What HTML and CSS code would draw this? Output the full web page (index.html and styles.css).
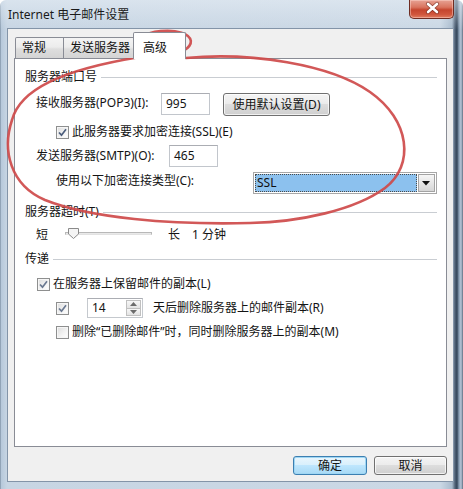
FILE: index.html
```html
<!DOCTYPE html>
<html lang="zh-CN">
<head>
<meta charset="utf-8">
<title>Internet 电子邮件设置</title>
<link rel="stylesheet" href="styles.css">
</head>
<body>
<div class="window">
  <div class="titlebar">
    <span class="title">Internet 电子邮件设置</span>
    <div class="close">
      <svg width="45" height="19" viewBox="0 0 45 19">
        <path d="M18 5 L27 13 M27 5 L18 13" stroke="#5a1a10" stroke-width="4.2" stroke-linecap="round" opacity="0.55"/>
        <path d="M18 5 L27 13 M27 5 L18 13" stroke="#ffffff" stroke-width="2.6" stroke-linecap="round"/>
      </svg>
    </div>
  </div>
  <div class="client">
    <div class="tabs">
      <div class="tab tab-general">常规</div>
      <div class="tab tab-send">发送服务器</div>
      <div class="tab tab-adv active">高级</div>
    </div>
    <div class="panel">
      <div class="group"><span>服务器端口号</span><i class="rule"></i></div>

      <div class="row row-pop">
        <span class="lbl lbl-pop">接收服务器(POP3)(I):</span>
        <span class="input">995</span>
        <span class="btn btn-default">使用默认设置(D)</span>
      </div>

      <div class="row row-ssl">
        <span class="cb checked"><svg width="11" height="11" viewBox="0 0 11 11"><path d="M2 5.5 L4.5 8.2 L9 2.3" fill="none" stroke="#4b5d7c" stroke-width="1.7"/></svg></span>
        <span class="cb-text">此服务器要求加密连接(SSL)(E)</span>
      </div>

      <div class="row row-smtp">
        <span class="lbl lbl-smtp">发送服务器(SMTP)(O):</span>
        <span class="input">465</span>
      </div>

      <div class="row row-crypt">
        <span class="lbl lbl-crypt">使用以下加密连接类型(C):</span>
        <span class="select">
          <span class="select-value">SSL</span>
          <span class="select-arrow"><svg width="9" height="5" viewBox="0 0 9 5"><path d="M0 0 H8 L4 4.5 Z" fill="#111"/></svg></span>
        </span>
      </div>

      <div class="group group-timeout"><span>服务器超时(T)</span><i class="rule"></i></div>

      <div class="row row-slider">
        <span class="s-short">短</span>
        <span class="slider">
          <i class="track"></i>
          <svg class="thumb" width="11" height="11" viewBox="0 0 11 11"><path d="M0.5 0.5 H10.5 V6 L5.5 10.5 L0.5 6 Z" fill="#f4f4f4" stroke="#8a8a8a"/></svg>
        </span>
        <span class="s-long">长</span>
        <span class="s-val">1 分钟</span>
      </div>

      <div class="group group-deliver"><span>传递</span><i class="rule"></i></div>

      <div class="row row-keep">
        <span class="cb checked"><svg width="11" height="11" viewBox="0 0 11 11"><path d="M2 5.5 L4.5 8.2 L9 2.3" fill="none" stroke="#6a7890" stroke-width="1.7"/></svg></span>
        <span class="cb-text">在服务器上保留邮件的副本(L)</span>
      </div>

      <div class="row row-days">
        <span class="cb checked"><svg width="11" height="11" viewBox="0 0 11 11"><path d="M2 5.5 L4.5 8.2 L9 2.3" fill="none" stroke="#6a7890" stroke-width="1.7"/></svg></span>
        <span class="spin">
          <span class="spin-val">14</span>
          <span class="spin-btns">
            <span class="spin-b"><svg width="7" height="4" viewBox="0 0 7 4"><path d="M0 4 L3.5 0 L7 4 Z" fill="#6b6b6b"/></svg></span>
            <span class="spin-b"><svg width="7" height="4" viewBox="0 0 7 4"><path d="M0 0 L3.5 4 L7 0 Z" fill="#6b6b6b"/></svg></span>
          </span>
        </span>
        <span class="days-text">天后删除服务器上的邮件副本(R)</span>
      </div>

      <div class="row row-del">
        <span class="cb"></span>
        <span class="cb-text">删除“已删除邮件”时，同时删除服务器上的副本(M)</span>
      </div>
    </div>
    <div class="footer">
      <span class="btn btn-ok">确定</span>
      <span class="btn btn-cancel">取消</span>
    </div>
  </div>

  <svg class="annot" width="463" height="489" viewBox="0 0 463 489">
    <ellipse cx="162" cy="44" rx="29" ry="13" transform="rotate(-6 162 44)" fill="none" stroke="#cf4a4a" stroke-width="2.6"/>
    <path d="M186 58 C250 52, 330 64, 370 92 C410 120, 415 165, 385 188 C355 210, 300 222, 250 223 C170 225, 90 218, 45 200 C10 185, 2 150, 12 120 C20 90, 60 70, 140 57" fill="none" stroke="#cf4a4a" stroke-width="2.6" stroke-linecap="round"/>
  </svg>
</div>
</body>
</html>
```

FILE: styles.css
```css
* { box-sizing: border-box; }

html, body {
  margin: 0;
  padding: 0;
  background: #ffffff;
}

.window {
  position: relative;
  width: 463px;
  height: 489px;
  display: flex;
  flex-direction: column;
  font-family: "Noto Sans", "Noto Sans CJK SC", sans-serif;
  font-size: 12px;
  color: #141414;
  background:
    linear-gradient(to bottom, rgba(232, 239, 246, 0.55) 0, rgba(214, 225, 236, 0) 30px),
    linear-gradient(to right, #6c7f93 0, #b6c8da 1px, #c7d5e3 7px, #cbd8e5 440px, #a9bbcd 452px, #506277 455px, #34465a 457px, #8a9fb5 459px, #b6c6d7 461px, #5d6e81 463px);
  border-radius: 6px 6px 0 0;
}

.titlebar {
  height: 28px;
  display: flex;
  align-items: flex-start;
  flex: none;
}

.title {
  margin-top: 6px;
  padding-left: 8px;
  line-height: 18px;
  color: #1a1a1a;
}

.close {
  margin-left: auto;
  margin-right: 9px;
  width: 45px;
  height: 19px;
  border: 1px solid #6e2c22;
  border-top: none;
  border-radius: 0 0 5px 5px;
  background: linear-gradient(to bottom, #e7a294 0, #d9745f 40%, #c5452e 55%, #d0563c 80%, #e07c5f 100%);
  box-shadow: inset 0 0 0 1px rgba(255, 220, 210, 0.45);
}

.close svg { display: block; margin-top: -1px; }

.client {
  flex: 1;
  margin: 0 9px 7px 7px;
  border: 1px solid #8394a8;
  background: #f0f0f0;
  display: flex;
  flex-direction: column;
  padding: 3px 6px 6px 6px;
}

/* tabs */
.tabs {
  display: flex;
  align-items: flex-end;
  height: 27px;
  margin-left: 1px;
  margin-bottom: -1px;
  position: relative;
  z-index: 1;
  flex: none;
}

.tab {
  height: 21px;
  margin-bottom: 1px;
  border: 1px solid #898c95;
  border-bottom: none;
  background: linear-gradient(to bottom, #f4f4f4 0, #ececec 45%, #dedede 55%, #d4d4d4 100%);
  line-height: 19px;
  padding-left: 6px;
  white-space: nowrap;
}

.tab-general { width: 49px; border-radius: 2px 0 0 0; }
.tab-send { width: 73px; margin-left: -1px; }

.tab.active {
  width: 53px;
  height: 27px;
  margin-left: -3px;
  margin-bottom: 0;
  background: #ffffff;
  padding-left: 9px;
  line-height: 30px;
  border-radius: 2px 2px 0 0;
}

/* panel */
.panel {
  flex: none;
  height: 389px;
  border: 1px solid #898c95;
  background: #ffffff;
  padding: 9px 9px 0 10px;
}

.group {
  display: flex;
  align-items: center;
  height: 18px;
  line-height: 18px;
}

.group .rule {
  flex: 1;
  height: 1px;
  margin-left: 4px;
  background: #c9cdd2;
}

.row {
  display: flex;
  align-items: center;
  line-height: 18px;
  white-space: nowrap;
}

.lbl { display: block; }

.row-pop {
  margin-top: 7px;
  height: 23px;
  align-items: flex-start;
  padding-left: 11px;
}
.row-pop .lbl { margin-top: 1px; }
.lbl-pop { width: 125px; }

.input {
  display: block;
  width: 49px;
  height: 22px;
  border: 1px solid #c2c6cc;
  border-top-color: #abadb3;
  background: #fff;
  padding-left: 4px;
  line-height: 20px;
}

.btn {
  display: block;
  height: 23px;
  border: 1px solid #707070;
  border-radius: 3px;
  background: linear-gradient(to bottom, #f4f4f4 0, #ececec 45%, #dddddd 50%, #cfcfcf 100%);
  box-shadow: inset 0 0 0 1px rgba(255, 255, 255, 0.7);
  text-align: center;
  line-height: 21px;
}

.btn-default {
  margin-left: 13px;
  width: 107px;
}

.row-ssl {
  margin-top: 7px;
  height: 18px;
  padding-left: 31px;
}

.cb {
  display: block;
  flex: none;
  width: 13px;
  height: 13px;
  border: 1px solid #8e8f8f;
  background: linear-gradient(135deg, #dcdcdc 0, #f4f4f4 60%, #ffffff 100%);
  box-shadow: inset 0 0 0 1px #f6f6f6;
}
.cb svg { display: block; margin: 0; }

.cb-text { margin-left: 3px; }

.row-smtp {
  margin-top: 4px;
  height: 22px;
  padding-left: 11px;
}
.lbl-smtp { width: 133px; }

.row-crypt {
  margin-top: 5px;
  height: 22px;
  align-items: flex-start;
  padding-left: 31px;
}
.lbl-crypt { width: 197px; }

.select {
  display: flex;
  width: 184px;
  height: 22px;
  border: 1px solid #a7a7a7;
  background: #fff;
  padding: 1px;
}

.select-value {
  flex: 1;
  background: #8cc1ee;
  border: 1px dotted #4a4a4a;
  line-height: 16px;
  padding-left: 1px;
  color: #101010;
}

.select-arrow {
  width: 17px;
  margin-left: 1px;
  border: 1px solid #a3a3a3;
  background: linear-gradient(to bottom, #f6f6f6 0, #e6e6e6 50%, #d6d6d6 100%);
  display: flex;
  align-items: center;
  justify-content: center;
}
.select-arrow svg { display: block; }

.group-timeout { margin-top: 9px; }

.row-slider {
  margin-top: 5px;
  height: 18px;
  padding-left: 11px;
}

.slider {
  position: relative;
  display: block;
  width: 87px;
  height: 18px;
  margin-left: 17px;
}

.slider .track {
  position: absolute;
  left: 0;
  right: 0;
  top: 6px;
  height: 3px;
  border: 1px solid #b8b8b8;
  border-bottom-color: #e2e2e2;
  background: #e9e9e9;
}

.slider .thumb {
  position: absolute;
  left: 3px;
  top: 2px;
}

.s-long { margin-left: 16px; }
.s-val { margin-left: 12px; }

.group-deliver { margin-top: 6px; }

.row-keep {
  margin-top: 7px;
  height: 18px;
  padding-left: 12px;
}

.row-days {
  margin-top: 5px;
  height: 20px;
  padding-left: 31px;
}

.spin {
  display: flex;
  width: 56px;
  height: 20px;
  margin-left: 18px;
  border: 1px solid #c5c9ce;
  border-top-color: #abadb3;
  background: #fff;
}

.spin-val {
  flex: 1;
  padding-left: 4px;
  line-height: 18px;
}

.spin-btns {
  display: flex;
  flex-direction: column;
  width: 16px;
  padding: 1px 1px 1px 0;
}

.spin-b {
  flex: 1;
  display: flex;
  align-items: center;
  justify-content: center;
  border: 1px solid #c0c0c0;
  background: linear-gradient(to bottom, #f7f7f7, #e3e3e3);
}
.spin-b + .spin-b { border-top: none; }
.spin-b svg { display: block; }

.days-text { margin-left: 10px; }

.row-del {
  margin-top: 5px;
  height: 18px;
  padding-left: 31px;
}

/* footer */
.footer {
  display: flex;
  justify-content: flex-end;
  gap: 7px;
  margin-top: 9px;
  flex: none;
}

.footer .btn { height: 19px; line-height: 17px; }
.btn-ok {
  width: 74px;
  border-color: #3c7fb1;
  box-shadow: inset 0 0 0 1px #9fd7f4;
  background: linear-gradient(to bottom, #eaf6fd 0, #d9f0fc 45%, #bee6fd 50%, #a7d9f5 100%);
}
.btn-cancel { width: 73px; }

/* annotation overlay */
.annot {
  position: absolute;
  left: 0;
  top: 0;
  pointer-events: none;
  opacity: 0.92;
}
```
